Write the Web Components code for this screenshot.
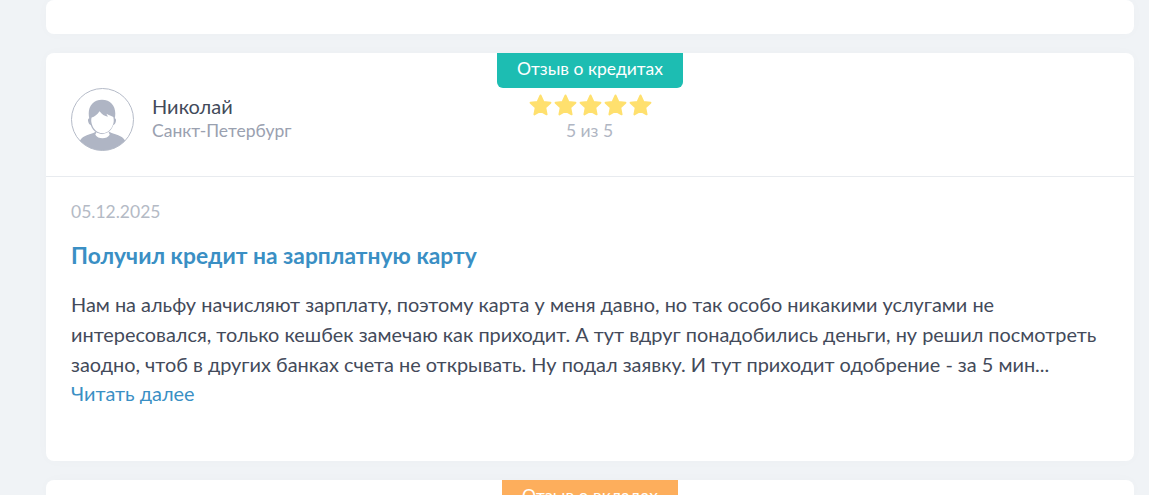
<!DOCTYPE html>
<html lang="ru">
<head>
<meta charset="utf-8">
<title>Отзывы</title>
<style>
html, body { margin: 0; height: 495px; overflow: hidden; }
body {
    background: #f0f3f6;
    font-family: Lato, "Open Sans", "Liberation Sans", sans-serif;
    color: #3c4353;
}
</style>
</head>
<body>
<review-list>
    <review-card class="stub" style="height:34px"></review-card>
    <review-card badge="Отзыв о кредитах" kind="credit">
        <review-author slot="author" name="Николай" city="Санкт-Петербург"></review-author>
        <review-stars slot="rating" value="5"></review-stars>
        <span slot="date">05.12.2025</span>
        <span slot="title">Получил кредит на зарплатную карту</span>
        Нам на альфу начисляют зарплату, поэтому карта у меня давно, но так особо никакими услугами не интересовался, только кешбек замечаю как приходит. А тут вдруг понадобились деньги, ну решил посмотреть заодно, чтоб в других банках счета не открывать. Ну подал заявку. И тут приходит одобрение - за 5 мин...
    </review-card>
    <review-card badge="Отзыв о вкладах" kind="deposit" style="height:15px"></review-card>
</review-list>

<script>
class ReviewList extends HTMLElement {
    connectedCallback() {
        this.attachShadow({ mode: 'open' });
        this.shadowRoot.innerHTML = `
            <style>
                :host {
                    display: flex;
                    flex-direction: column;
                    gap: 19px;
                    width: 1088px;
                    margin-left: 46px;
                }
            </style>
            <slot></slot>
        `;
    }
}

class ReviewCard extends HTMLElement {
    connectedCallback() {
        const badge = this.getAttribute('badge');
        const isFull = this.querySelector('[slot=author]');
        this.attachShadow({ mode: 'open' });
        this.shadowRoot.innerHTML = `
            <style>
                :host {
                    display: block;
                    position: relative;
                    flex: none;
                    background: #fff;
                    border-radius: 8px;
                    box-shadow: 0 0 14px rgba(60, 60, 60, 0.02);
                }
                :host([kind=credit]) { --badge: #1dbdb2; --badge-radius: 0 0 6px 6px; --badge-w: 186px; --badge-h: 35px; }
                :host([kind=deposit]) { --badge: #fdae5c; --badge-radius: 0; --badge-w: 176px; --badge-h: 15px; border-radius: 8px 8px 0 0; }
                .badge {
                    position: absolute;
                    top: 0;
                    left: 544px;
                    transform: translateX(-50%);
                    width: var(--badge-w);
                    height: var(--badge-h);
                    overflow: hidden;
                    box-sizing: border-box;
                    background: var(--badge);
                    border-radius: var(--badge-radius);
                    color: #fff;
                    font-size: 17.5px;
                    line-height: 32px;
                    text-align: center;
                    white-space: nowrap;
                }
                header {
                    display: grid;
                    grid-template-columns: 1fr auto 1fr;
                    height: 124px;
                    padding: 35px 25px 0;
                    box-sizing: border-box;
                    border-bottom: 1px solid #e8ebef;
                }
                .content {
                    padding: 25px 25px 52px;
                }
                .date {
                    font-size: 17.5px;
                    line-height: 20px;
                    color: #b4bac5;
                }
                h3 {
                    margin: 18px 0 0;
                    font-size: 22.8px;
                    line-height: 30px;
                    font-weight: 700;
                    color: #3a8fc4;
                }
                .text {
                    margin-top: 20px;
                    font-size: 19.9px;
                    line-height: 29.8px;
                    color: #434a5a;
                }
                a {
                    display: block;
                    color: #3a8fc4;
                    text-decoration: none;
                }
            </style>
            ${badge ? `<div class="badge">${badge}</div>` : ''}
            ${isFull ? `
            <header>
                <slot name="author"></slot>
                <slot name="rating"></slot>
                <span></span>
            </header>
            <div class="content">
                <div class="date"><slot name="date"></slot></div>
                <h3><slot name="title"></slot></h3>
                <div class="text"><slot></slot><a href="#">Читать далее</a></div>
            </div>` : ''}
        `;
    }
}

class ReviewAuthor extends HTMLElement {
    connectedCallback() {
        this.attachShadow({ mode: 'open' });
        this.shadowRoot.innerHTML = `
            <style>
                :host {
                    display: flex;
                    align-items: flex-start;
                    gap: 18px;
                }
                svg { display: block; flex: none; }
                .info { padding-top: 6px; }
                .name {
                    font-size: 20px;
                    line-height: 25px;
                    color: #434a5a;
                }
                .city {
                    font-size: 17.5px;
                    line-height: 23px;
                    color: #9aa1b0;
                }
            </style>
            <svg width="63" height="63" viewBox="0 0 64 64">
                <defs><clipPath id="c"><circle cx="32" cy="32" r="31.500"/></clipPath></defs>
                <g clip-path="url(#c)" fill="#afb5c4">
                    <path d="M6 64c1-9 4-14 10-16 4-1.300 7-2 9-3.500l1 1.500c1.500 2.500 3.500 3.500 6 3.500s4.500-1 6-3.500l1-1.500c2 1.500 5 2.200 9 3.500 6 2 9 7 10 16z"/>
                    <path d="M31.500 12c-8.500 0-13.500 6-13.500 14 0 1.800.2 3.300.5 4.700-1.300.3-1.500 1.900-1 3.600.5 1.700 1.300 3 2.500 3.200 1.200 3.700 3.500 6.400 6.500 8l5 1.500 5-1.500c3-1.600 5.300-4.300 6.500-8 1.200-.2 2-1.500 2.500-3.200.5-1.700.3-3.300-1-3.600.3-1.400.5-2.900.5-4.700 0-8-5-14-13.500-14z"/>
                </g>
                <path d="M21 30c2.800-.8 6-3.300 8-6.500 2.200 3 5.200 5 8.500 5.700l-1.500-3c2.500 1.300 5 2.500 7 3.300.4 1.500.5 3 .4 4.500-.5 4.700-3.300 9-7.200 11-2.700 1.300-5.700 1.300-8.400 0-3.900-2-6.700-6.300-7.200-11-.1-1.500 0-3 .4-4z" fill="#fff"/>
                <path d="M25.500 45.500c3.800 2.200 9.200 2.200 13 0l.8 2c-1.400 2.500-4.200 3.500-7.300 3.500s-5.900-1-7.300-3.500z" fill="#fff"/>
                <circle cx="32" cy="32" r="31.500" fill="none" stroke="#b4bac7" stroke-width="1"/>
            </svg>
            <div class="info">
                <div class="name">${this.getAttribute('name')}</div>
                <div class="city">${this.getAttribute('city')}</div>
            </div>
        `;
    }
}

class ReviewStars extends HTMLElement {
    connectedCallback() {
        const value = this.getAttribute('value');
        const star = `<svg width="23" height="22" viewBox="0 0 24 23"><path d="M12 1.500l3.100 6.700 7.300.9-5.400 5 1.400 7.200-6.400-3.600-6.400 3.600 1.400-7.200-5.400-5 7.300-.9z" fill="#ffe06e" stroke="#ffe06e" stroke-width="2" stroke-linejoin="round"/></svg>`;
        this.attachShadow({ mode: 'open' });
        this.shadowRoot.innerHTML = `
            <style>
                :host {
                    display: flex;
                    flex-direction: column;
                    align-items: center;
                    padding: 6px 0 0 1px;
                }
                .stars { display: flex; gap: 2px; height: 26px; }
                .label {
                    margin-left: -2px;
                    font-size: 17.5px;
                    line-height: 22px;
                    color: #b0b6c3;
                }
            </style>
            <div class="stars">${star.repeat(Number(value))}</div>
            <div class="label">${value} из 5</div>
        `;
    }
}

customElements.define('review-list', ReviewList);
customElements.define('review-card', ReviewCard);
customElements.define('review-author', ReviewAuthor);
customElements.define('review-stars', ReviewStars);
</script>
</body>
</html>
